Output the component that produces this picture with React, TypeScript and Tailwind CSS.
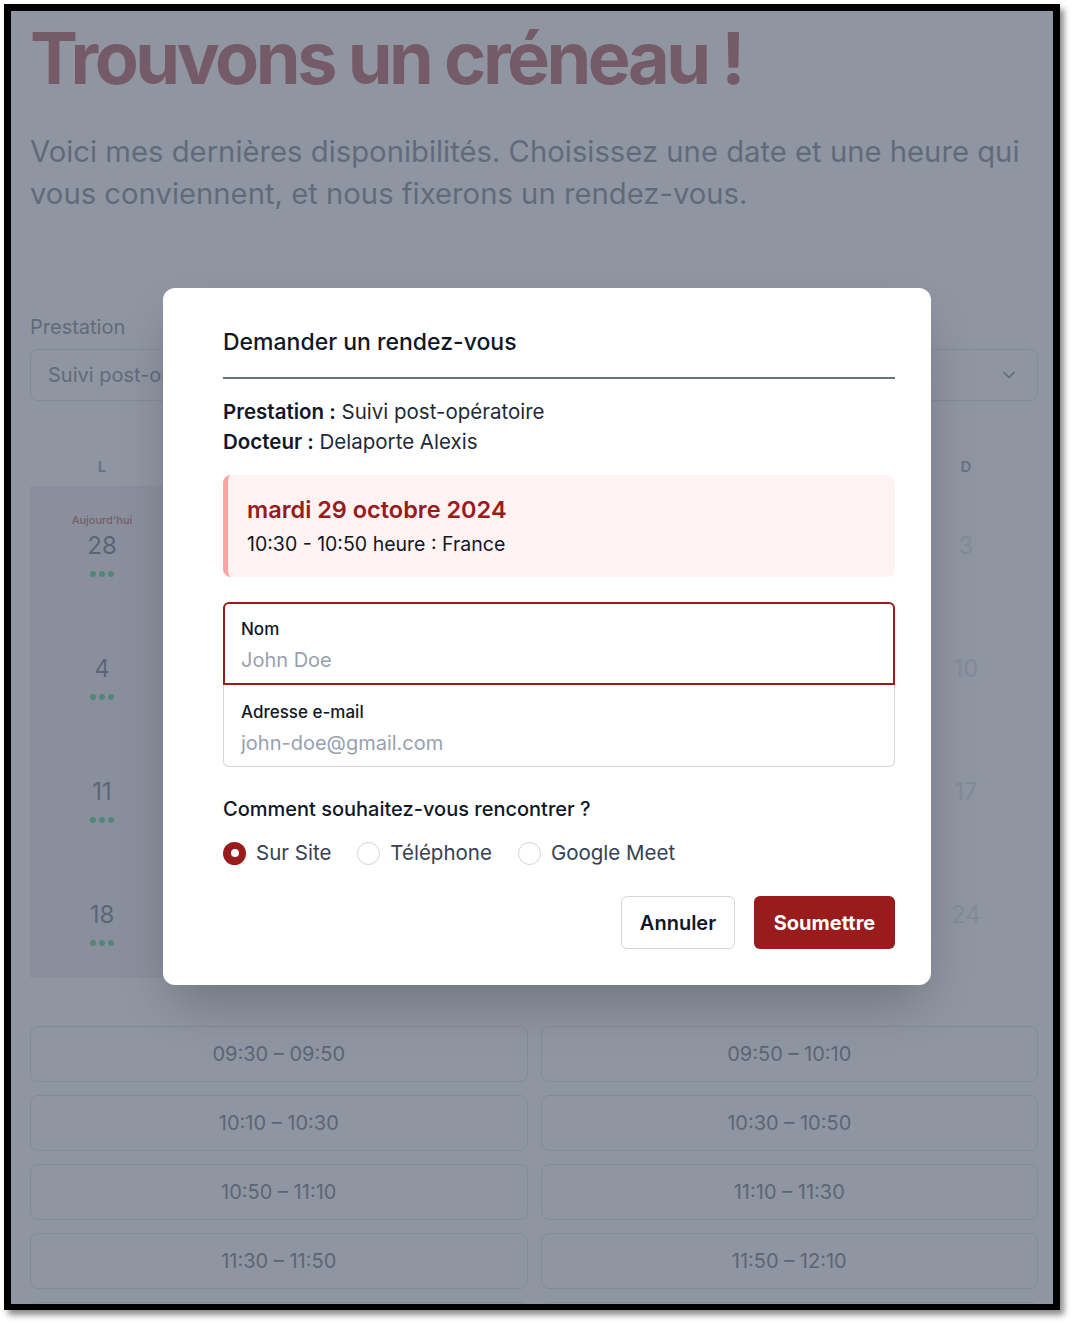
import React from "react";

const font = { fontFamily: "Inter, 'Noto Sans', sans-serif" };

function Dots() {
  return (
    <div className="mt-[6px] flex h-[6px] items-center gap-[3px]">
      <span className="h-[6px] w-[6px] rounded-full bg-green-500" />
      <span className="h-[6px] w-[6px] rounded-full bg-green-500" />
      <span className="h-[6px] w-[6px] rounded-full bg-green-500" />
    </div>
  );
}

function DayCell({ n, today, dots, muted }: { n: number; today?: boolean; dots?: boolean; muted?: boolean }) {
  return (
    <div className="flex h-[123px] flex-col items-center pt-[27px]">
      <div className="h-[14px] text-[11px] font-medium leading-[14px] text-[#991b1b]">{today ? "Aujourd'hui" : ""}</div>
      <div className={"h-[38px] text-[24px] leading-[38px] " + (muted ? "text-gray-300" : "text-gray-700")}>{n}</div>
      {dots && <Dots />}
    </div>
  );
}

const weeks = [
  [28, 29, 30, 31, 1, 2, 3],
  [4, 5, 6, 7, 8, 9, 10],
  [11, 12, 13, 14, 15, 16, 17],
  [18, 19, 20, 21, 22, 23, 24],
];
const days = ["L", "M", "M", "J", "V", "S", "D"];
const slots = [
  "09:30 – 09:50",
  "09:50 – 10:10",
  "10:10 – 10:30",
  "10:30 – 10:50",
  "10:50 – 11:10",
  "11:10 – 11:30",
  "11:30 – 11:50",
  "11:50 – 12:10",
  "12:10 – 12:30",
  "12:30 – 12:50",
];

function Radio({ checked, label }: { checked?: boolean; label: string }) {
  return (
    <label className="flex items-center gap-[10px]">
      <span
        className={
          "flex h-[23px] w-[23px] items-center justify-center rounded-full " +
          (checked ? "bg-[#991b1b]" : "border border-gray-300 bg-white")
        }
      >
        {checked && <span className="h-[8px] w-[8px] rounded-full bg-white" />}
      </span>
      <span className="text-[20.5px] text-gray-700">{label}</span>
    </label>
  );
}

export default function App() {
  return (
    <div className="h-[1323px] w-[1073px] bg-white pl-[4px] pt-[4px]" style={font}>
      <div className="h-[1306px] w-[1056px] border-b-[6px] border-l-[7px] border-r-[7px] border-t-[7px] border-black shadow-[4px_5px_6px_rgba(0,0,0,0.45)]">
        <div className="relative h-full w-full overflow-hidden bg-white">
          {/* page */}
          <div className="pl-[19px] pr-[15px] pt-[7px]">
            <h1 className="text-[72px] font-bold leading-[80px] tracking-[-0.048em] text-[#991b1b]">Trouvons un créneau !</h1>
            <p className="mt-[33px] text-[29.25px] leading-[42px] text-gray-600">
              Voici mes dernières disponibilités. Choisissez une date et une heure qui vous conviennent, et nous fixerons un rendez-vous.
            </p>

            <div className="mt-[98px] text-[20px] leading-[28px] text-gray-600">Prestation</div>
            <div className="mt-[8px] flex h-[52px] items-center justify-between rounded-lg border border-gray-300 pl-[17px] pr-[18px]">
              <span className="text-[20px] text-gray-600">Suivi post-opératoire</span>
              <svg width="20" height="20" viewBox="0 0 24 24" fill="none" stroke="#4b5563" strokeWidth="2" strokeLinecap="round" strokeLinejoin="round">
                <path d="m6 9 6 6 6-6" />
              </svg>
            </div>

            <div className="mt-[54px] grid grid-cols-7">
              {days.map((d, i) => (
                <div key={i} className="text-center text-[15px] font-semibold leading-[24px] text-gray-500">{d}</div>
              ))}
            </div>
            <div className="mt-[7px] grid grid-cols-7">
              {days.map((_, col) => (
                <div key={col} className={col === 0 ? "bg-gray-200" : ""}>
                  {weeks.map((w, row) => (
                    <DayCell
                      key={row}
                      n={w[col]}
                      today={col === 0 && row === 0}
                      dots={col < 5}
                      muted={col >= 5}
                    />
                  ))}
                </div>
              ))}
            </div>

            <div className="mt-[48px] grid grid-cols-2 gap-[13px]">
              {slots.map((s) => (
                <div key={s} className="flex h-[56px] items-center justify-center rounded-lg border border-gray-300 text-[20px] text-gray-700">
                  {s}
                </div>
              ))}
            </div>
          </div>

          {/* overlay */}
          <div className="absolute inset-0 bg-gray-500/75" />

          {/* modal */}
          <div className="absolute left-[152px] top-[277px] w-[768px] rounded-xl bg-white pb-[36px] pl-[60px] pr-[36px] pt-[40px] shadow-2xl">
            <div className="border-b-2 border-gray-500 pb-[21px]">
              <h2 className="text-[23px] font-medium leading-[28px] text-gray-900">Demander un rendez-vous</h2>
            </div>
            <div className="mt-[18px] text-[20.5px] leading-[30px] text-gray-800">
              <div><span className="font-semibold text-gray-900">Prestation :</span> Suivi post-opératoire</div>
              <div><span className="font-semibold text-gray-900">Docteur :</span> Delaporte Alexis</div>
            </div>

            <div className="mt-[18px] rounded-lg border-l-[5px] border-red-300 bg-red-50 pb-[19px] pl-[19px] pt-[19px]">
              <div className="text-[23.5px] font-semibold leading-[32px] text-[#991b1b]">mardi 29 octobre 2024</div>
              <div className="mt-[4px] text-[19.5px] leading-[28px] text-gray-900">10:30 - 10:50 heure : France</div>
            </div>

            <div className="mt-[25px]">
              <div className="h-[83px] rounded-t-md border-2 border-[#991b1b] pl-[16px] pt-[13px]">
                <div className="text-[17px] font-medium leading-[24px] text-gray-900">Nom</div>
                <div className="mt-[5px] text-[20px] leading-[28px] text-gray-400">John Doe</div>
              </div>
              <div className="h-[82px] rounded-b-md border border-t-0 border-gray-300 pl-[17px] pt-[15px]">
                <div className="text-[17px] font-medium leading-[24px] text-gray-900">Adresse e-mail</div>
                <div className="mt-[5px] text-[20px] leading-[28px] text-gray-400">john-doe@gmail.com</div>
              </div>
            </div>

            <div className="mt-[30px] text-[20px] font-medium leading-[24px] text-gray-900">Comment souhaitez-vous rencontrer ?</div>
            <div className="mt-[18px] flex h-[28px] items-center gap-[26px]">
              <Radio checked label="Sur Site" />
              <Radio label="Téléphone" />
              <Radio label="Google Meet" />
            </div>

            <div className="mt-[29px] flex justify-end gap-[19px]">
              <button className="h-[53px] w-[114px] rounded-md border border-gray-300 bg-white text-[20px] font-semibold text-gray-900">Annuler</button>
              <button className="h-[53px] w-[141px] rounded-md bg-[#991b1b] text-[20px] font-bold text-white">Soumettre</button>
            </div>
          </div>
        </div>
      </div>
    </div>
  );
}
